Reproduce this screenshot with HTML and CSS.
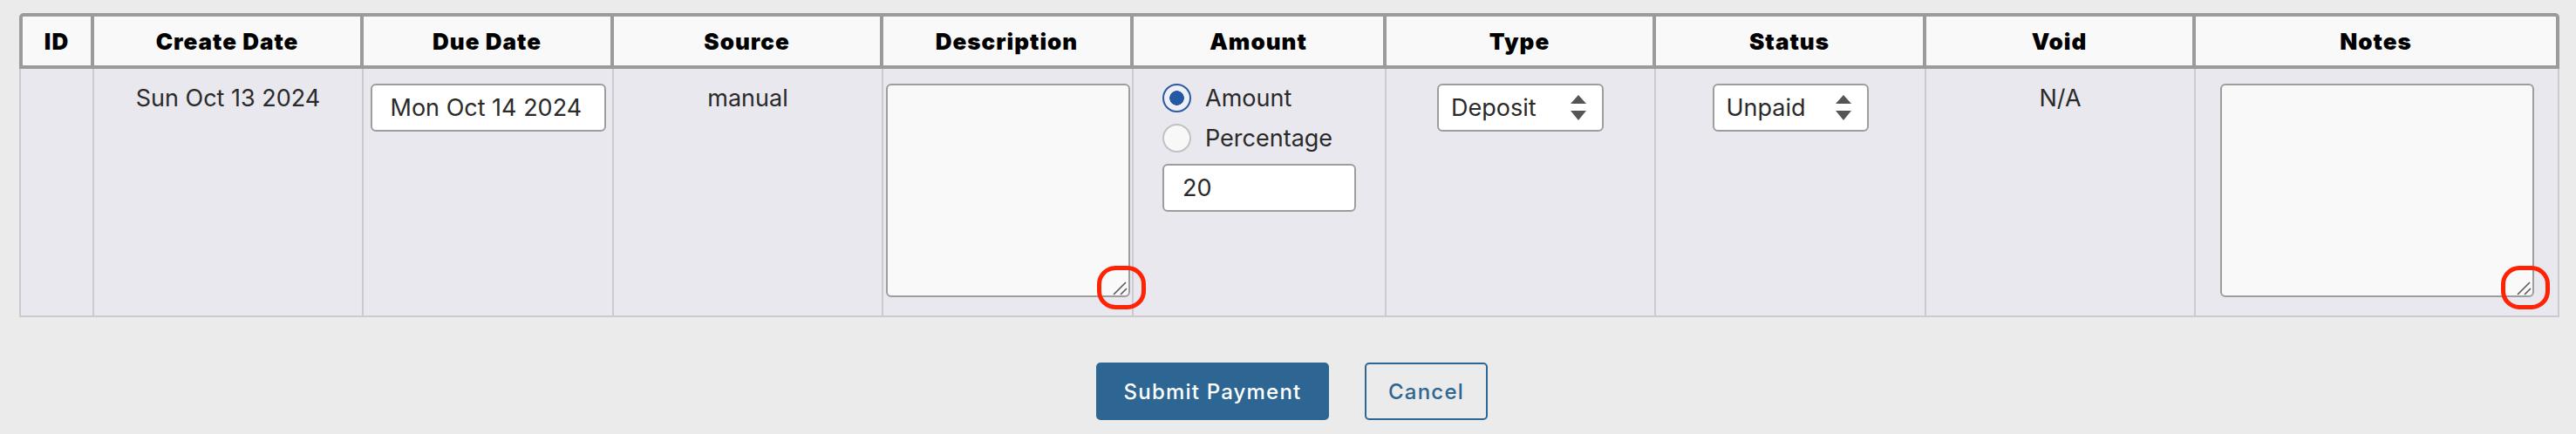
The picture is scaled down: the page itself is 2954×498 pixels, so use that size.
FILE: index.html
```html
<!DOCTYPE html>
<html lang="en">
<head>
<meta charset="utf-8">
<title>Payment</title>
<link rel="stylesheet" href="styles.css">
</head>
<body>
<div class="page">
  <table class="grid">
    <colgroup>
      <col class="w-id"><col class="w-create"><col class="w-due"><col class="w-source"><col class="w-desc">
      <col class="w-amount"><col class="w-type"><col class="w-status"><col class="w-void"><col class="w-notes">
    </colgroup>
    <thead>
      <tr>
        <th>ID</th><th>Create Date</th><th>Due Date</th><th>Source</th><th>Description</th>
        <th>Amount</th><th>Type</th><th>Status</th><th>Void</th><th>Notes</th>
      </tr>
    </thead>
    <tbody>
      <tr>
        <td></td>
        <td class="txt">Sun Oct 13 2024</td>
        <td><input class="field date" type="text" value="Mon Oct 14 2024"></td>
        <td class="txt">manual</td>
        <td>
          <span class="ta-wrap">
            <textarea class="ta ta-desc"></textarea>
            <svg class="grip" viewBox="0 0 20 20" width="20" height="20"><path d="M2 18 L16 4 M10 18 L17 11" stroke="#5a5a5a" stroke-width="1.6" fill="none"/></svg>
            <span class="ring"></span>
          </span>
        </td>
        <td>
          <div class="amount">
            <label class="opt"><input class="radio" type="radio" name="kind" checked><span>Amount</span></label>
            <label class="opt"><input class="radio" type="radio" name="kind"><span>Percentage</span></label>
            <input class="field num" type="text" value="20">
          </div>
        </td>
        <td>
          <span class="sel sel-type">
            <select><option>Deposit</option></select>
            <svg class="caret" viewBox="0 0 18 30" width="18" height="30"><path d="M9 0 L18 10 H0 Z M0 18 H18 L9 29 Z" fill="#555"/></svg>
          </span>
        </td>
        <td>
          <span class="sel sel-status">
            <select><option>Unpaid</option></select>
            <svg class="caret" viewBox="0 0 18 30" width="18" height="30"><path d="M9 0 L18 10 H0 Z M0 18 H18 L9 29 Z" fill="#555"/></svg>
          </span>
        </td>
        <td class="txt">N/A</td>
        <td>
          <span class="ta-wrap">
            <textarea class="ta ta-notes"></textarea>
            <svg class="grip" viewBox="0 0 20 20" width="20" height="20"><path d="M2 18 L16 4 M10 18 L17 11" stroke="#5a5a5a" stroke-width="1.6" fill="none"/></svg>
            <span class="ring"></span>
          </span>
        </td>
      </tr>
    </tbody>
  </table>
  <div class="actions">
    <button class="btn btn-primary" type="button">Submit Payment</button>
    <button class="btn btn-outline" type="button">Cancel</button>
  </div>
</div>
</body>
</html>
```
FILE: styles.css
```css
* { box-sizing: border-box; }

html, body {
  margin: 0;
  background: #ebebeb;
}

body {
  font-family: Inter, "Noto Sans", "Liberation Sans", sans-serif;
  font-size: 27px;
  color: #2a2a2a;
}

.page {
  padding: 15px 19px 0 22px;
}

.grid {
  table-layout: fixed;
  width: 2913px;
  border-collapse: separate;
  border-spacing: 0;
}

.w-id { width: 86px; }
.w-create { width: 309px; }
.w-due { width: 287px; }
.w-source { width: 309px; }
.w-desc { width: 287px; }
.w-amount { width: 290px; }
.w-type { width: 309px; }
.w-status { width: 310px; }
.w-void { width: 309px; }
.w-notes { width: 417px; }

.grid th {
  height: 64px;
  padding: 0;
  background: #f9f9f9;
  border-top: 4px solid #9b9b9b;
  border-bottom: 4px solid #9b9b9b;
  border-right: 4px solid #9b9b9b;
  font-weight: 900;
  font-size: 26px;
  letter-spacing: 1px;
  color: #000;
  text-align: center;
  vertical-align: middle;
}

.grid th:first-child {
  border-left: 4px solid #9b9b9b;
  border-top-left-radius: 5px;
}

.grid th:last-child {
  border-top-right-radius: 5px;
}

.grid td {
  padding: 17px 0 21px;
  background: #e9e8ee;
  border-right: 2px solid #cacacf;
  border-bottom: 2px solid #cacacf;
  text-align: center;
  vertical-align: top;
}

.grid td:first-child {
  border-left: 2px solid #cacacf;
}

.grid td.txt {
  line-height: 33px;
}

.field {
  display: block;
  margin: 0 auto;
  height: 55px;
  border: 2px solid #9d9d9d;
  border-radius: 6px;
  background: #fff;
  font: inherit;
  color: #2a2a2a;
  padding: 0 0 0 21px;
  outline: none;
}

.field.date { width: 270px; }
.field.num { width: 222px; margin: 13px 0 0; }

.ta-wrap {
  position: relative;
  display: block;
  width: fit-content;
  margin: 0 auto;
}

.ta {
  display: block;
  height: 245px;
  border: 2px solid #9d9d9d;
  border-radius: 6px;
  background: #f9f9f9;
  font: inherit;
  resize: none;
  outline: none;
}

.ta-desc { width: 280px; }
.ta-notes { width: 360px; }

.grip {
  position: absolute;
  right: 1px;
  bottom: 1px;
  pointer-events: none;
}

.ring {
  position: absolute;
  right: -18px;
  bottom: -14px;
  width: 56px;
  height: 50px;
  border: 5px solid #ff2305;
  border-radius: 21px;
  pointer-events: none;
}

.amount {
  display: inline-flex;
  flex-direction: column;
  align-items: flex-start;
  gap: 13px;
  width: 222px;
  text-align: left;
}

.opt {
  display: flex;
  align-items: center;
  gap: 16px;
  height: 33px;
  line-height: 33px;
}

.radio {
  appearance: none;
  margin: 0;
  width: 33px;
  height: 33px;
  border-radius: 50%;
  border: 2px solid #c2c2c4;
  background: #f8f8f8;
  flex: none;
}

.radio:checked {
  border-color: #2a5ca4;
  background: radial-gradient(circle, #2459a6 0 8px, #eef0f6 8.6px);
}

.amount .field.num { margin: 0; }

.sel {
  position: relative;
  display: inline-block;
}

.sel select {
  appearance: none;
  -webkit-appearance: none;
  display: block;
  height: 55px;
  border: 2px solid #9d9d9d;
  border-radius: 6px;
  background: #fff;
  font: inherit;
  color: #2a2a2a;
  padding: 0 0 0 14px;
  outline: none;
}

.sel-type select { width: 191px; }
.sel-status select { width: 179px; }

.sel .caret {
  position: absolute;
  right: 20px;
  top: 13px;
  pointer-events: none;
}

.actions {
  display: flex;
  justify-content: center;
  gap: 41px;
  margin-top: 52px;
  padding-left: 6px;
}

.btn {
  height: 66px;
  padding: 0;
  border-radius: 5px;
  font-family: Inter, "Noto Sans", sans-serif;
  font-size: 24px;
  font-weight: 500;
  letter-spacing: 1.2px;
}

.btn-primary {
  width: 267px;
  background: #2d6692;
  border: 2px solid #2d6692;
  color: #fff;
}

.btn-outline {
  width: 141px;
  background: transparent;
  border: 2px solid #2d6692;
  color: #2d6692;
}
```
